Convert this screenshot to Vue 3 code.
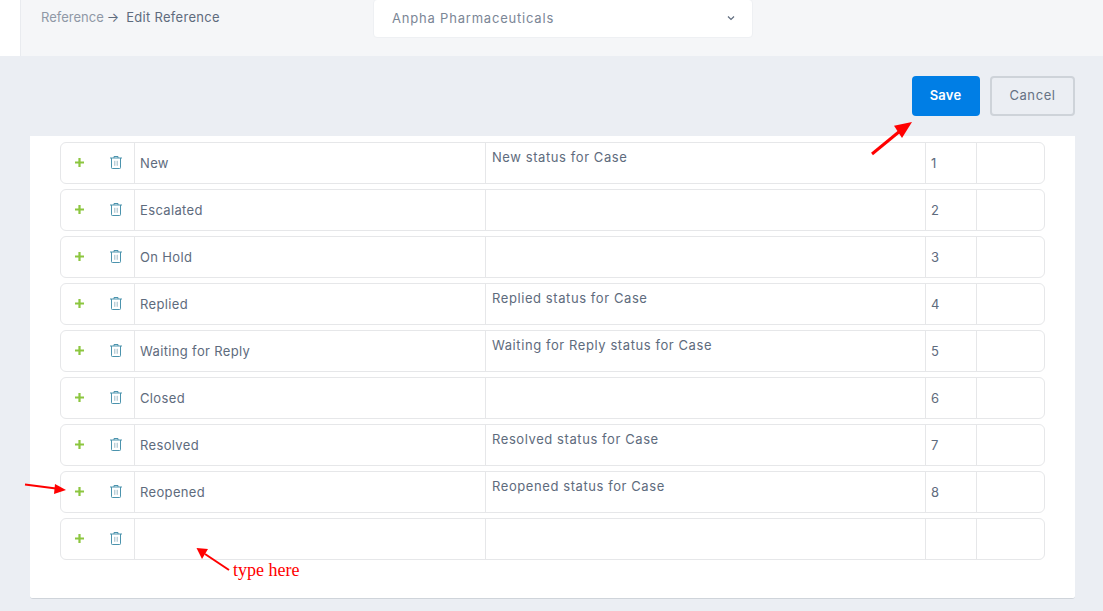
<script setup>
const rows = [
  { name: 'New', desc: 'New status for Case', order: '1' },
  { name: 'Escalated', desc: '', order: '2' },
  { name: 'On Hold', desc: '', order: '3' },
  { name: 'Replied', desc: 'Replied status for Case', order: '4' },
  { name: 'Waiting for Reply', desc: 'Waiting for Reply status for Case', order: '5' },
  { name: 'Closed', desc: '', order: '6' },
  { name: 'Resolved', desc: 'Resolved status for Case', order: '7' },
  { name: 'Reopened', desc: 'Reopened status for Case', order: '8' },
  { name: '', desc: '', order: '' }
]
</script>

<template>
  <div class="page">
    <header class="top">
      <div class="top-inner">
        <div class="crumbs">
          <span class="crumb-muted">Reference</span>
          <span class="crumb-arrow">→</span>
          <span class="crumb-current">Edit Reference</span>
        </div>
        <div class="select">
          <span>Anpha Pharmaceuticals</span>
          <svg class="chev" width="8" height="6" viewBox="0 0 8 6"><path d="M1 1.500 L4 4.500 L7 1.500" fill="none" stroke="#5f6c7e" stroke-width="1.200"/></svg>
        </div>
      </div>
    </header>

    <div class="actions">
      <button class="btn save">Save</button>
      <button class="btn cancel">Cancel</button>
    </div>

    <section class="card">
      <div v-for="(r, i) in rows" :key="i" class="row">
        <div class="cell tools">
          <svg class="plus" width="9" height="9" viewBox="0 0 9 9"><path d="M4.500 0v9M0 4.500h9" stroke="#8cc63f" stroke-width="2.200" fill="none"/></svg>
          <svg class="trash" width="12" height="13" viewBox="0 0 12 13" fill="none" stroke="#4b93ad" stroke-width="1">
            <path d="M0 2h12M1.500 2v9.700a.8.8 0 0 0 .8.8h7.400a.8.8 0 0 0 .8-.8V2M4 2V.5h4V2"/>
            <path d="M4.800 4.800v5M7.200 4.800v5" stroke="#9bb9c6"/>
          </svg>
        </div>
        <div class="cell name">{{ r.name }}</div>
        <div class="cell desc">{{ r.desc }}</div>
        <div class="cell order">{{ r.order }}</div>
        <div class="cell last"></div>
      </div>
    </section>

    <svg class="marks" width="1103" height="611" viewBox="0 0 1103 611">
      <g stroke="#ff0000" fill="#ff0000">
        <path d="M872 154 L900 131" stroke-width="3" fill="none"/>
        <path d="M912 122 L894 125.700 L902 138 Z" stroke="none"/>
        <path d="M25 484.500 L56 488.500" stroke-width="2" fill="none"/>
        <path d="M66 490 L55 484 L54 494 Z" stroke="none"/>
        <path d="M229 570 L205 554" stroke-width="2" fill="none"/>
        <path d="M196.500 548 L208 549 L202 559 Z" stroke="none"/>
      </g>
      <text x="233" y="576" class="note">type here</text>
    </svg>
  </div>
</template>

<style>
html, body { margin: 0; background: #ebeef3; }
</style>

<style scoped>
.page {
  position: relative;
  width: 1103px;
  height: 611px;
  overflow: hidden;
  background: #ebeef3;
  font-family: Inter, "Open Sans", sans-serif;
  color: #5e6b7d;
  font-size: 13px;
}
.top {
  height: 56px;
  padding-left: 20px;
  background: #fff;
}
.top-inner {
  height: 56px;
  box-sizing: border-box;
  border-left: 1px solid #e9ebef;
  background: #f5f6f8;
  display: flex;
  align-items: flex-start;
  padding-left: 20px;
}
.crumbs {
  width: 332px;
  display: flex;
  gap: 3px;
  line-height: 35px;
  font-size: 13px;
  white-space: nowrap;
}
.crumb-muted { color: #8f98a6; }
.crumb-arrow { color: #5e6b7d; }
.crumb-current { color: #5e6b7d; margin-left: 4px; letter-spacing: .3px; }
.select {
  width: 380px;
  height: 39px;
  margin-top: -1px;
  box-sizing: border-box;
  background: #fff;
  border: 1px solid #eef0f3;
  border-radius: 4px;
  display: flex;
  align-items: center;
  justify-content: space-between;
  padding: 0 17px 2px 18px;
  font-size: 13px;
  letter-spacing: .8px;
  color: #7b8696;
}
.actions {
  display: flex;
  justify-content: flex-end;
  gap: 10px;
  padding: 20px 28px 20px 0;
}
.btn {
  height: 40px;
  border-radius: 4px;
  font-family: inherit;
  font-size: 13px;
  padding: 0 0 2px;
}
.save {
  width: 68px;
  border: 0;
  background: #007ee5;
  color: #fff;
  font-weight: 600;
  padding-right: 1px;
  letter-spacing: .2px;
}
.cancel {
  width: 85px;
  border: 2px solid #ced3d9;
  background: #ebeef3;
  color: #667284;
  letter-spacing: .6px;
}
.card {
  width: 1045px;
  height: 463px;
  margin-left: 30px;
  box-sizing: border-box;
  background: #fff;
  border-bottom: 1px solid #cfd4da;
  border-radius: 0 0 3px 3px;
  padding: 6px 30px 0;
  display: flex;
  flex-direction: column;
  gap: 5px;
}
.row {
  height: 42px;
  box-sizing: border-box;
  border: 1px solid #e6e7e9;
  border-radius: 6px;
  display: grid;
  grid-template-columns: 74px 351px 440px 51px 1fr;
}
.cell {
  box-sizing: border-box;
  border-right: 1px solid #e6e7e9;
  display: flex;
  align-items: center;
  padding: 0 5px;
  line-height: 1;
}
.cell.last { border-right: 0; }
.tools {
  padding: 0 0 1px 14px;
  gap: 26px;
}
.name { padding-top: 1px; letter-spacing: .35px; }
.desc {
  align-items: flex-start;
  padding: 8px 6px 0;
  letter-spacing: .58px;
}
.order { padding-top: 1px; }
.marks {
  position: absolute;
  left: 0;
  top: 0;
  pointer-events: none;
}
.note {
  font-family: "Liberation Serif", serif;
  font-size: 18px;
  fill: #ff0000;
  stroke: none;
}
</style>
